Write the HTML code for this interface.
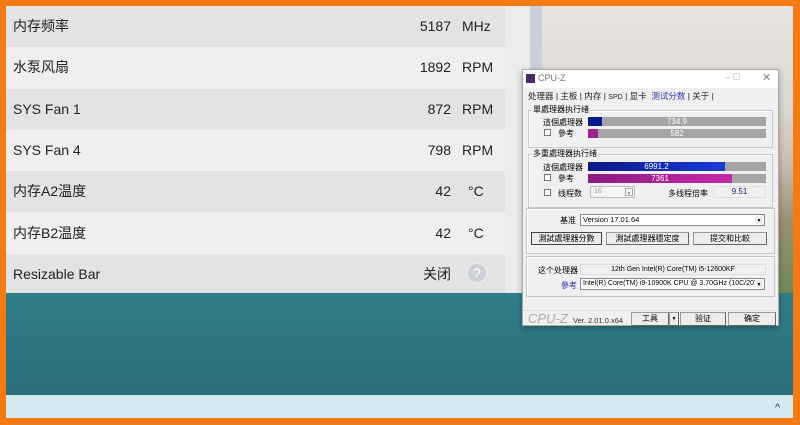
<!DOCTYPE html>
<html><head><meta charset="utf-8"><style>
*{margin:0;padding:0;box-sizing:border-box}
body{width:800px;height:425px;overflow:hidden;background:#f47b14;font-family:"Liberation Sans","Noto Sans CJK SC",sans-serif;position:relative}
.a{position:absolute}
.row{position:absolute;left:6px;width:499px;height:41.3px;font-size:14px;color:#222;line-height:40px}
.row .l{position:absolute;left:7px;top:0}
.row .v{position:absolute;right:54px;top:0}
.row .u{position:absolute;left:456px;top:0}
.cz{font-size:8px;color:#000}
.bar{position:absolute;height:9px;background:#a5a5a5;color:#fff;font-size:8px;text-align:center;line-height:9px}
.grp{position:absolute;border:1px solid #c8c8c8;box-shadow:inset 1px 1px 0 #fff}
.btn{position:absolute;height:13px;background:#ececec;border:1px solid #999;border-right-color:#666;border-bottom-color:#666;font-size:8px;text-align:center;line-height:11px}
.cb{position:absolute;width:7px;height:7px;border:1px solid #777;background:#fff}
</style></head><body>
<div class="a" style="left:6px;top:6px;width:787px;height:389px;background:#e7e5e3"></div>
<div class="a" style="left:540px;top:6px;width:253px;height:290px;background:linear-gradient(180deg,#e6e3e1 0%,#ddd8d2 35%,#c9bcae 55%,#9a9070 75%,#6b8a55 100%)"></div>
<div class="a" style="left:530px;top:6px;width:12px;height:287px;background:#c9cfdd"></div>
<div class="a" style="left:6px;top:293px;width:787px;height:102px;background:linear-gradient(180deg,#2f7f88 0,#2d7681 50%,#2b6f7a 100%)"></div>
<div class="a" style="left:6px;top:395px;width:787px;height:23px;background:#d3e9ef"></div>
<div class="a" style="left:775px;top:402px;font-size:11px;color:#333">^</div>
<div class="a" style="left:6px;top:6px;width:524px;height:287px;background:#ececec"></div>
<div class="row" style="top:6px;background:#e3e3e3"><span class="l">内存频率</span><span class="v">5187</span><span class="u">MHz</span></div>
<div class="row" style="top:47.3px;background:#efefef"><span class="l">水泵风扇</span><span class="v">1892</span><span class="u">RPM</span></div>
<div class="row" style="top:88.6px;background:#e3e3e3"><span class="l">SYS Fan 1</span><span class="v">872</span><span class="u">RPM</span></div>
<div class="row" style="top:129.9px;background:#efefef"><span class="l">SYS Fan 4</span><span class="v">798</span><span class="u">RPM</span></div>
<div class="row" style="top:171.2px;background:#e3e3e3"><span class="l">内存A2温度</span><span class="v">42</span><span class="u" style="left:462px">°C</span></div>
<div class="row" style="top:212.5px;background:#efefef"><span class="l">内存B2温度</span><span class="v">42</span><span class="u" style="left:462px">°C</span></div>
<div class="row" style="top:253.8px;height:39px;background:#e3e3e3"><span class="l">Resizable Bar</span><span class="v">关闭</span>
<div class="a" style="left:460px;top:8px;width:22px;height:22px;border-radius:50%;background:#cdd0d6;border:2px solid #e8eaee;color:#fff;font-size:14px;text-align:center;line-height:18px">?</div></div>
<div class="a cz" style="left:522px;top:69px;width:257px;height:257px;background:#f0f0f0;border:1px solid #aaa;box-shadow:0 2px 6px rgba(0,0,0,.3)">
 <div class="a" style="left:0;top:0;width:255px;height:18px;background:#fff"></div>
 <div class="a" style="left:3px;top:4px;width:9px;height:9px;background:#4b2a6a"></div>
 <div class="a" style="left:15px;top:3px;font-size:9px;color:#777">CPU-Z</div>
 <div class="a" style="left:202px;top:2px;font-size:9px;color:#aaa">–</div>
 <div class="a" style="left:210px;top:3px;width:7px;height:7px;border:1px solid #ddd"></div>
 <div class="a" style="left:239px;top:1px;font-size:11px;color:#888">✕</div>
 <div class="a" style="left:5px;top:20px;font-size:8.5px;white-space:nowrap;color:#222">处理器 | 主板 | 内存 | <span style="font-size:7px">SPD</span> | 显卡 &nbsp;<span style="color:#3333aa">测试分数</span> | 关于 |</div>
 <div class="grp" style="left:5px;top:40px;width:245px;height:38px"></div>
 <div class="a" style="left:9px;top:34px;background:#f0f0f0;padding:0 1px">單處理器执行绪</div>
 <div class="a" style="left:20px;top:47px">這個處理器</div>
 <div class="cb" style="left:21px;top:59px"></div><div class="a" style="left:35px;top:58px">參考</div>
 <div class="bar" style="left:65px;top:47px;width:178px">734.9</div>
 <div class="a" style="left:65px;top:47px;width:14px;height:9px;background:#0b1a8a"></div>
 <div class="bar" style="left:65px;top:59px;width:178px">582</div>
 <div class="a" style="left:65px;top:59px;width:10px;height:9px;background:#a0208e"></div>
 <div class="grp" style="left:5px;top:84px;width:245px;height:54px"></div>
 <div class="a" style="left:9px;top:78px;background:#f0f0f0;padding:0 1px">多重處理器执行绪</div>
 <div class="a" style="left:20px;top:92px">這個處理器</div>
 <div class="bar" style="left:65px;top:92px;width:178px"></div>
 <div class="bar" style="left:65px;top:92px;width:137px;background:linear-gradient(90deg,#0b1a8a,#1a3ad8)">6991.2</div>
 <div class="cb" style="left:21px;top:104px"></div><div class="a" style="left:35px;top:103px">參考</div>
 <div class="bar" style="left:65px;top:104px;width:178px"></div>
 <div class="bar" style="left:65px;top:104px;width:144px;background:linear-gradient(90deg,#8f1a80,#c22aa8)">7361</div>
 <div class="cb" style="left:21px;top:119px"></div><div class="a" style="left:35px;top:118px">线程数</div>
 <div class="a" style="left:67px;top:116px;width:45px;height:12px;border:1px solid #bbb;background:#f4f4f4;color:#999;font-size:7px;padding-left:3px;line-height:10px">16<span style="position:absolute;right:1px;top:1px;width:8px;height:8px;border:1px solid #aaa;font-size:5px;text-align:center">▼</span></div>
 <div class="a" style="left:145px;top:118px">多线程倍率</div>
 <div class="a" style="left:190px;top:116px;width:53px;height:12px;border:1px solid #ddd;text-align:center;color:#22227a;line-height:10px">9.51</div>
 <div class="grp" style="left:3px;top:138px;width:249px;height:46px"></div>
 <div class="a" style="left:37px;top:145px">基准</div>
 <div class="a" style="left:57px;top:144px;width:185px;height:12px;border:1px solid #888;background:#fff;padding-left:2px;line-height:10px;font-size:7.5px">Version 17.01.64<span style="position:absolute;right:1px;top:1px;width:8px;height:8px;font-size:5px;text-align:center;background:#eee">▼</span></div>
 <div class="btn" style="left:8px;top:162px;width:71px;border:1px solid #444">測試處理器分數</div>
 <div class="btn" style="left:83px;top:162px;width:83px">測試處理器穩定度</div>
 <div class="btn" style="left:170px;top:162px;width:74px">提交和比較</div>
 <div class="grp" style="left:3px;top:186px;width:249px;height:41px"></div>
 <div class="a" style="left:15px;top:195px">这个处理器</div>
 <div class="a" style="left:57px;top:194px;width:186px;height:11px;border:1px solid #ddd;text-align:center;line-height:9px;font-size:7px">12th Gen Intel(R) Core(TM) i5-12600KF</div>
 <div class="a" style="left:38px;top:210px;color:#2a2aa0">參考</div>
 <div class="a" style="left:57px;top:208px;width:185px;height:12px;border:1px solid #888;background:#fff;padding-left:2px;line-height:10px;font-size:7px;white-space:nowrap;overflow:hidden">Intel(R) Core(TM) i9-10900K CPU @ 3.70GHz (10C/20T<span style="position:absolute;right:1px;top:1px;width:8px;height:8px;font-size:5px;text-align:center;background:#eee">▼</span></div>
 <div class="a" style="left:0;top:240px;width:255px;height:1px;background:#ddd"></div>
 <div class="a" style="left:5px;top:241px;font-size:13px;font-style:italic;color:#aaa">CPU-Z</div>
 <div class="a" style="left:50px;top:246px;font-size:7.5px;color:#333">Ver. 2.01.0.x64</div>
 <div class="btn" style="left:108px;top:242px;width:38px;height:14px;line-height:12px">工具</div>
 <div class="btn" style="left:146px;top:242px;width:10px;height:14px;font-size:5px;line-height:12px">▼</div>
 <div class="btn" style="left:157px;top:242px;width:46px;height:14px;line-height:12px">验证</div>
 <div class="btn" style="left:205px;top:242px;width:48px;height:14px;line-height:12px">确定</div>
</div>
</body></html>
